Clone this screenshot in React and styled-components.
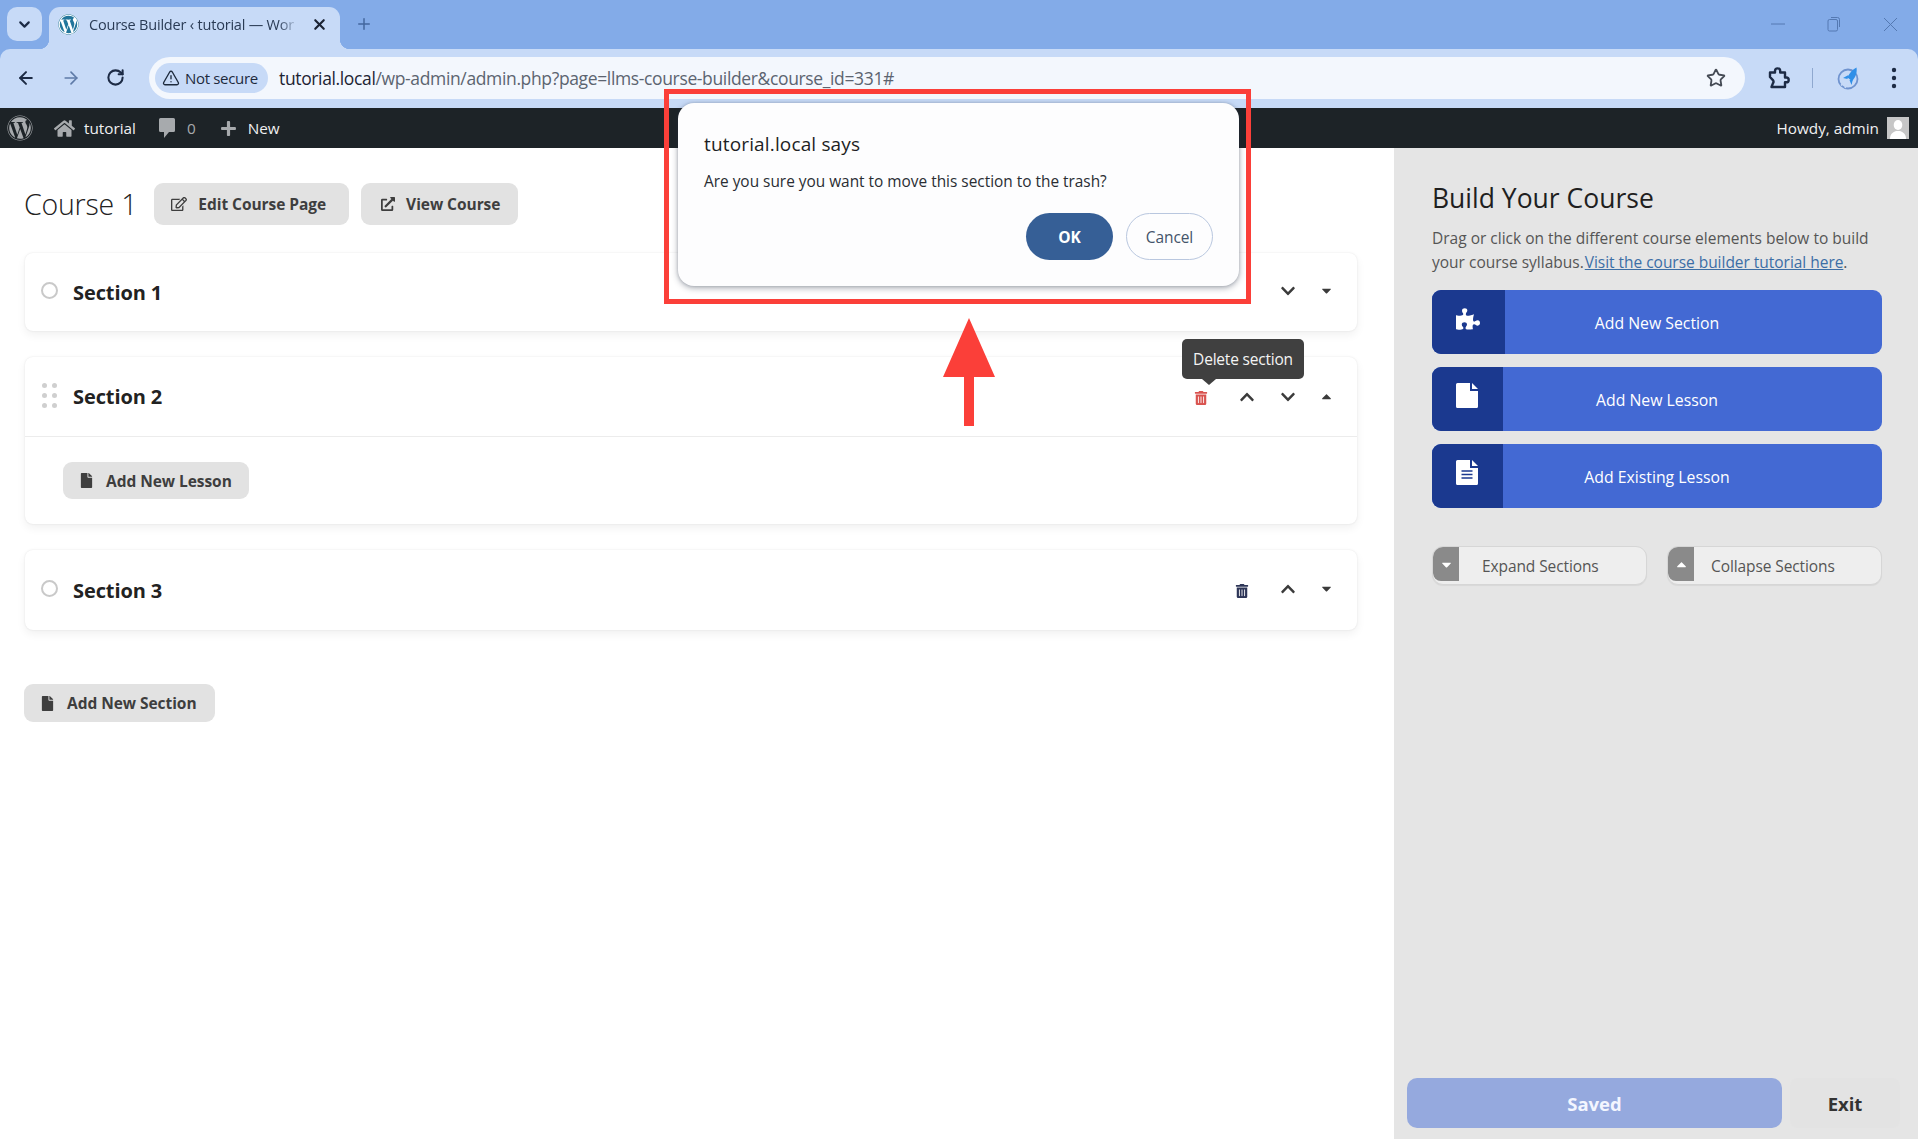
import React from "react";
import styled, { createGlobalStyle } from "styled-components";
import {
  FaWordpress, FaHome, FaPlus, FaRegEdit, FaExternalLinkAlt, FaFile,
  FaPuzzlePiece, FaTrashAlt, FaChevronUp, FaChevronDown, FaCaretUp, FaCaretDown,
} from "react-icons/fa";
import { ArrowLeft, ArrowRight, RotateCw, ChevronDown, X, Plus, TriangleAlert, Star } from "lucide-react";

const Global = createGlobalStyle`
  html, body { margin: 0; padding: 0; background: #fff; }
  body { font-family: "Open Sans", "Noto Sans", "Liberation Sans", sans-serif; overflow: hidden; }
  * { box-sizing: border-box; }
`;

const Page = styled.div`
  position: relative;
  width: 1918px;
  height: 1139px;
  display: flex;
  flex-direction: column;
  overflow: hidden;
  background: #fff;
`;

const Browser = styled.div`
  background: #83abe8;
  flex: none;
`;

const TabStrip = styled.div`
  height: 49px;
  display: flex;
  align-items: flex-end;
  padding-left: 7px;
`;

const TabList = styled.div`
  width: 35px;
  height: 34px;
  margin-bottom: 8px;
  border-radius: 10px;
  background: #c7daf7;
  display: flex;
  align-items: center;
  justify-content: center;
  color: #1d2b45;
`;

const Tab = styled.div`
  position: relative;
  width: 291px;
  height: 42px;
  margin-left: 7px;
  background: #c7daf7;
  border-radius: 11px 11px 0 0;
  display: flex;
  align-items: center;
  padding: 0 12px 7px 9px;
  &::before, &::after {
    content: "";
    position: absolute;
    bottom: 0;
    width: 10px;
    height: 10px;
  }
  &::before { left: -10px; background: radial-gradient(circle at 0 0, transparent 10px, #c7daf7 10.5px); }
  &::after { right: -10px; background: radial-gradient(circle at 100% 0, transparent 10px, #c7daf7 10.5px); }
`;

const Favicon = styled.span`
  width: 21px;
  height: 21px;
  border-radius: 50%;
  background: #fff;
  color: #21759b;
  display: flex;
  flex: none;
  font-size: 21px;
`;

const TabTitle = styled.span`
  flex: 1;
  margin-left: 10px;
  font-size: 14.5px;
  letter-spacing: -0.2px;
  color: #2a3b55;
  white-space: nowrap;
  overflow: hidden;
  -webkit-mask-image: linear-gradient(90deg, #000 90%, transparent 100%);
  mask-image: linear-gradient(90deg, #000 90%, transparent 100%);
`;

const TabClose = styled.span`
  display: flex;
  margin-left: 12px;
  color: #1b2333;
`;

const NewTab = styled.span`
  display: flex;
  margin: 0 0 16px 15px;
  color: #43679f;
`;

const WindowControls = styled.div`
  margin-left: auto;
  margin-right: 20px;
  margin-bottom: 17px;
  display: flex;
  align-items: center;
  gap: 42px;
  color: #5479b2;
`;

const Toolbar = styled.div`
  height: 59px;
  background: #c7daf7;
  border-radius: 10px 10px 0 0;
  display: flex;
  align-items: center;
  padding: 0 17px 2px 16px;
`;

const NavIcon = styled.span`
  display: flex;
  width: 20px;
  margin-right: ${(p) => p.$gap || 25}px;
  color: ${(p) => p.$color || "#1d2b45"};
`;

const Omnibox = styled.div`
  width: 1596px;
  height: 42px;
  margin-left: 10px;
  border-radius: 21px;
  background: #f3f7fd;
  display: flex;
  align-items: center;
  padding: 0 19px 0 6px;
`;

const SecurityChip = styled.span`
  height: 30px;
  padding: 0 0 0 7px;
  width: 113px;
  border-radius: 15px;
  background: #c7daf7;
  display: flex;
  align-items: center;
  gap: 5px;
  font-size: 15px;
  font-weight: 500;
  letter-spacing: -0.32px;
  color: #1d2a3d;
  white-space: nowrap;
`;

const Url = styled.div`
  margin-left: 11px;
  flex: 1;
  font-size: 17.5px;
  letter-spacing: -0.36px;
  color: #5c6470;
  white-space: nowrap;
  & b { font-weight: 400; color: #1d2433; }
`;

const ToolIcons = styled.div`
  display: flex;
  align-items: center;
  margin-left: 21px;
  color: #1d2b45;
`;

const ToolSep = styled.span`
  width: 1px;
  height: 20px;
  background: #8fa8cf;
  margin: 0 24px 0 22px;
`;

const ToolGap = styled.span`
  width: 30px;
`;

const AdminBar = styled.div`
  height: 40px;
  flex: none;
  background: #1d2327;
  display: flex;
  align-items: center;
  padding: 0 9px 0 7px;
  color: #f0f0f1;
  font-size: 15.3px;
`;

const AdminIcon = styled.span`
  display: flex;
  color: #a7aaad;
  margin-right: ${(p) => p.$mr || 0}px;
`;

const AdminText = styled.span`
  color: ${(p) => p.$muted ? "#a7aaad" : "#f0f0f1"};
  margin-right: ${(p) => p.$mr || 0}px;
`;

const Avatar = styled.span`
  width: 22px;
  height: 22px;
  margin-left: 8px;
  display: flex;
  background: #c6c6c6;
`;

const Spacer = styled.span`flex: 1;`;

const Workspace = styled.div`
  flex: 1;
  display: flex;
  min-height: 0;
`;

const Main = styled.main`
  flex: 1;
  padding: 35px 37px 0 25px;
`;

const CourseHeader = styled.header`
  display: flex;
  align-items: center;
  height: 42px;
  margin-bottom: 28px;
`;

const CourseTitle = styled.h1`
  margin: 0 17px 0 -1px;
  font-size: 28.5px;
  font-weight: 300;
  letter-spacing: -0.2px;
  color: #222;
  white-space: nowrap;
`;

const GreyButton = styled.button`
  height: ${(p) => p.$h || 42}px;
  padding: 0 ${(p) => p.$pr || 18}px 0 ${(p) => p.$pl || 18}px;
  margin-right: ${(p) => p.$mr || 0}px;
  margin-left: ${(p) => p.$ml || 0}px;
  border: 0;
  border-radius: 9px;
  background: #e2e2e2;
  color: #3e3e3e;
  font: 700 15.5px "Open Sans", sans-serif;
  letter-spacing: -0.05px;
  display: inline-flex;
  align-items: center;
  gap: ${(p) => p.$gap || 11}px;
  white-space: nowrap;
`;

const SectionList = styled.div`
  display: flex;
  flex-direction: column;
  gap: 26px;
`;

const Card = styled.section`
  background: #fff;
  border-radius: 8px;
  box-shadow: 0 0 2px rgba(0,0,0,.1), 0 4px 10px rgba(0,0,0,.06);
`;

const CardHead = styled.div`
  height: ${(p) => p.$h}px;
  display: flex;
  align-items: center;
  padding-left: 16px;
  border-bottom: ${(p) => p.$open ? "1px solid #ececec" : "0"};
`;

const Radio = styled.span`
  width: 17px;
  height: 17px;
  margin: -3px 0 0 0;
  border: 2px solid #c9c9c9;
  border-radius: 50%;
`;

const Handle = styled.span`
  width: 17px;
  margin-top: -2px;
  display: grid;
  grid-template-columns: 5px 5px;
  grid-auto-rows: 5px;
  justify-content: space-between;
  row-gap: 5px;
  padding: 0 1px;
  & i { background: #cfcfcf; border-radius: 50%; }
`;

const SectionName = styled.h2`
  margin: 0 0 0 15px;
  font-size: 20px;
  font-weight: 700;
  letter-spacing: -0.1px;
  color: #222;
  flex: 1;
`;

const CardTools = styled.div`
  display: grid;
  grid-template-columns: 24px 17px 24px 17px 24px 14px 24px;
  align-items: center;
  justify-items: center;
  margin-right: 19px;
  margin-top: ${(p) => p.$mt || 0}px;
  color: #3b3b3b;
  & > span { display: flex; grid-row: 1; }
`;

const TrashSlot = styled.span`
  grid-column: ${(p) => p.$col};
  position: relative;
  margin: ${(p) => p.$mt}px 10px 0 0;
  color: ${(p) => p.$color};
`;

const ToolSlot = styled.span`
  grid-column: ${(p) => p.$col};
`;

const Tooltip = styled.div`
  position: absolute;
  left: -12px;
  bottom: 26px;
  height: 40px;
  width: 122px;
  border-radius: 5px;
  background: #404040;
  color: #f4f4f4;
  font-size: 15.5px;
  letter-spacing: -0.2px;
  display: flex;
  align-items: center;
  justify-content: center;
  white-space: nowrap;
  &::after {
    content: "";
    position: absolute;
    left: 20px;
    bottom: -6px;
    border-left: 7px solid transparent;
    border-right: 7px solid transparent;
    border-top: 6px solid #404040;
  }
`;

const CardBody = styled.div`
  height: 87px;
  padding: 25px 0 0 38px;
`;

const AddRow = styled.div`
  margin-top: 54px;
`;

const Sidebar = styled.aside`
  width: 524px;
  flex: none;
  background: #e5e5e5;
  display: flex;
  flex-direction: column;
  padding: 30px 36px 11px 38px;
`;

const SideTitle = styled.h2`
  margin: 0 0 8px;
  font-size: 26.5px;
  line-height: 40px;
  font-weight: 500;
  color: #1f1f1f;
`;

const Intro = styled.p`
  margin: 0 0 16px;
  font-size: 15.5px;
  line-height: 24px;
  color: #555;
  white-space: nowrap;
  & a { color: #3c6ea5; text-decoration: underline; letter-spacing: -0.03px; margin-left: -3px; }
`;

const ActionList = styled.div`
  display: flex;
  flex-direction: column;
  gap: 13px;
`;

const ActionButton = styled.button`
  height: 64px;
  border: 0;
  padding: 0;
  border-radius: 9px;
  overflow: hidden;
  background: #4369d3;
  color: #fff;
  display: grid;
  grid-template-columns: ${(p) => p.$cell}px 1fr ${(p) => p.$cell}px;
  align-items: center;
  font: 400 15.8px "Open Sans", sans-serif;
`;

const ActionIcon = styled.span`
  height: 100%;
  background: #1b398f;
  display: flex;
  align-items: center;
  padding-left: 24px;
  padding-bottom: 7px;
`;

const ActionLabel = styled.span`
  margin-top: 2px;
`;

const ToggleRow = styled.div`
  display: flex;
  justify-content: space-between;
  margin-top: 38px;
`;

const ToggleButton = styled.button`
  width: 215px;
  height: 39px;
  padding: 0;
  border: 1px solid #d6d6d6;
  border-radius: 11px;
  background: #eeeeee;
  color: #555;
  font: 400 15.5px "Open Sans", sans-serif;
  letter-spacing: -0.1px;
  display: flex;
  align-items: center;
  overflow: hidden;
  box-shadow: 0 1px 1px rgba(0,0,0,.06);
`;

const ToggleIcon = styled.span`
  width: 26px;
  height: 34px;
  margin: -3px ${(p) => p.$mr}px 0 0;
  background: #8a8a8a;
  color: #fff;
  border-radius: 8px 0 0 8px;
  display: flex;
  align-items: center;
  justify-content: center;
`;

const SaveRow = styled.div`
  margin: auto -18px 0 -25px;
  display: flex;
  gap: 8px;
`;

const SaveButton = styled.button`
  width: 375px;
  height: 50px;
  border: 0;
  border-radius: 10px;
  background: #95a9de;
  color: #f3f6ff;
  font: 700 18.5px "Open Sans", sans-serif;
`;

const ExitButton = styled.button`
  width: 110px;
  height: 50px;
  border: 0;
  border-radius: 8px;
  background: #e3e3e3;
  color: #333;
  font: 700 18.5px "Open Sans", sans-serif;
`;

const Dialog = styled.div`
  position: absolute;
  left: 678px;
  top: 103px;
  width: 561px;
  height: 183px;
  border-radius: 16px;
  background: #fdfdfe;
  box-shadow: 0 2px 6px rgba(40,50,70,.4), 0 0 3px rgba(40,50,70,.2);
  padding: 28px 26px 0 26px;
  z-index: 3;
`;

const DialogTitle = styled.div`
  font-size: 19px;
  line-height: 26px;
  font-weight: 500;
  letter-spacing: 0.15px;
  color: #1d1f24;
`;

const DialogText = styled.div`
  margin-top: 13px;
  font-size: 15.4px;
  line-height: 24px;
  color: #2a2d33;
`;

const DialogActions = styled.div`
  margin-top: 19px;
  display: flex;
  justify-content: flex-end;
  gap: 13px;
`;

const DialogButton = styled.button`
  width: 87px;
  height: 47px;
  border-radius: 24px;
  border: ${(p) => p.$primary ? "0" : "1px solid #b9c7df"};
  background: ${(p) => p.$primary ? "#365f96" : "#fdfdfe"};
  color: ${(p) => p.$primary ? "#fff" : "#44546a"};
  font: ${(p) => p.$primary ? 700 : 500} 15.5px "Open Sans", sans-serif;
  letter-spacing: -0.1px;
`;

const Highlight = styled.div`
  position: absolute;
  left: 664px;
  top: 89px;
  width: 587px;
  height: 215px;
  border: 5px solid #fb3f39;
  z-index: 4;
`;

const Arrow = styled.svg`
  position: absolute;
  left: 942px;
  top: 318px;
  z-index: 4;
`;

function ChromePuzzle() {
  return (
    <svg width="24" height="24" viewBox="0 0 24 24" fill="none" stroke="#1d2b45" strokeWidth="2.4" strokeLinejoin="round">
      <path d="M4 6.500h5V5a2.600 2.600 0 0 1 5.200 0v1.500H19v5h1.300a2.400 2.400 0 0 1 0 4.800H19V21H5.500l1.400-3.700a2.600 2.600 0 0 0 0-3.200L4 11z" />
    </svg>
  );
}

function ProfileRocket() {
  return (
    <svg width="24" height="24" viewBox="0 0 24 24">
      <circle cx="11" cy="13" r="9.500" fill="none" stroke="#6f93cf" strokeWidth="1.800" />
      <path d="M19.500 1.500c.8 5-.8 10-4.500 13.500l-4.500-3.500C12.500 7 15.500 3.500 19.500 1.500z" fill="#2f8fe8" />
      <path d="M11.500 9L6 12l4.500 1zM16 13l-1.500 6-2-5z" fill="#2f8fe8" />
      <path d="M4 19.500c1.500-2 3-3 4.500-3.500M8 22c1-2 2-3 3-4" fill="none" stroke="#c7daf7" strokeWidth="1.500" />
    </svg>
  );
}

function RestoreIcon() {
  return (
    <svg width="14" height="16" viewBox="0 0 14 16" fill="none" stroke="currentColor" strokeWidth="1">
      <rect x="1" y="3.500" width="9.500" height="11.500" rx="1.500" />
      <path d="M4 1.500h6.500a2 2 0 0 1 2 2V11" />
    </svg>
  );
}

function CloseThin() {
  return (
    <svg width="15" height="15" viewBox="0 0 15 15" stroke="currentColor" strokeWidth="1">
      <path d="M1 1l13 13M14 1L1 14" />
    </svg>
  );
}

function MinimizeIcon() {
  return (
    <svg width="14" height="2" viewBox="0 0 14 2" stroke="currentColor" strokeWidth="1">
      <path d="M0 1h14" />
    </svg>
  );
}

function Dots() {
  return (
    <svg width="6" height="22" viewBox="0 0 6 22" fill="#1d2b45">
      <circle cx="3" cy="3" r="2.200" /><circle cx="3" cy="11" r="2.200" /><circle cx="3" cy="19" r="2.200" />
    </svg>
  );
}

function AvatarFigure() {
  return (
    <svg width="22" height="22" viewBox="0 0 22 22" fill="#fff">
      <ellipse cx="11" cy="8" rx="4.300" ry="5" />
      <path d="M3 22c0-5 3-7 6-8h4c3 1 6 3 6 8z" />
    </svg>
  );
}

function AdminComment() {
  return (
    <svg width="18" height="22" viewBox="0 0 18 22" fill="currentColor">
      <path d="M2.500 1h13A1.500 1.500 0 0 1 17 2.500v11a1.500 1.500 0 0 1-1.500 1.500H11l-5 6v-6H2.500A1.500 1.500 0 0 1 1 13.500v-11A1.500 1.500 0 0 1 2.500 1z" />
    </svg>
  );
}

function SheetIcon({ lines }) {
  return (
    <svg width="22" height="25" viewBox="0 0 22 25">
      <path d="M1.500 0H14v8h8v15.500a1.500 1.500 0 0 1-1.500 1.500h-19A1.500 1.500 0 0 1 0 23.500v-22A1.500 1.500 0 0 1 1.500 0z" fill="#fff" />
      <path d="M16 0l6 6h-6z" fill="#fff" />
      {lines && <path d="M5.500 11h11M5.500 14.500h11M5.500 18h11" stroke="#1b398f" strokeWidth="1.400" />}
    </svg>
  );
}

export default function App() {
  return (
    <Page>
      <Global />
      <Browser>
        <TabStrip>
          <TabList><ChevronDown size={17} strokeWidth={3} /></TabList>
          <Tab>
            <Favicon><FaWordpress /></Favicon>
            <TabTitle>Course Builder ‹ tutorial — Wor</TabTitle>
            <TabClose><X size={17} strokeWidth={3} /></TabClose>
          </Tab>
          <NewTab><Plus size={18} strokeWidth={2} /></NewTab>
          <WindowControls>
            <MinimizeIcon />
            <RestoreIcon />
            <CloseThin />
          </WindowControls>
        </TabStrip>
        <Toolbar>
          <NavIcon><ArrowLeft size={20} strokeWidth={2.4} /></NavIcon>
          <NavIcon $color="#5f7ba8"><ArrowRight size={20} strokeWidth={2} /></NavIcon>
          <NavIcon $gap={13}><RotateCw size={19} strokeWidth={2.6} /></NavIcon>
          <Omnibox>
            <SecurityChip><TriangleAlert size={18} strokeWidth={1.8} />Not secure</SecurityChip>
            <Url><b>tutorial.local</b>/wp-admin/admin.php?page=llms-course-builder&amp;course_id=331#</Url>
            <Star size={20} strokeWidth={2.2} color="#454b55" />
          </Omnibox>
          <ToolIcons>
            <ChromePuzzle />
            <ToolSep />
            <ProfileRocket />
            <ToolGap />
            <Dots />
          </ToolIcons>
        </Toolbar>
      </Browser>
      <AdminBar>
        <AdminIcon $mr={21}><FaWordpress size={26} /></AdminIcon>
        <AdminIcon $mr={9}><FaHome size={21} /></AdminIcon>
        <AdminText $mr={22}>tutorial</AdminText>
        <AdminIcon $mr={11}><AdminComment /></AdminIcon>
        <AdminText $muted $mr={24}>0</AdminText>
        <AdminIcon $mr={11}><FaPlus size={17} /></AdminIcon>
        <AdminText>New</AdminText>
        <Spacer />
        <AdminText>Howdy, admin</AdminText>
        <Avatar><AvatarFigure /></Avatar>
      </AdminBar>
      <Workspace>
        <Main>
          <CourseHeader>
            <CourseTitle>Course 1</CourseTitle>
            <GreyButton $mr={12} $pl={17} $pr={23}><FaRegEdit size={16} />Edit Course Page</GreyButton>
            <GreyButton $pl={20} $pr={18}><FaExternalLinkAlt size={14} />View Course</GreyButton>
          </CourseHeader>
          <SectionList>
            <Card>
              <CardHead $h={78}>
                <Radio />
                <SectionName>Section 1</SectionName>
                <CardTools $mt={-3}>
                  <ToolSlot $col={5}><FaChevronDown size={16} /></ToolSlot>
                  <ToolSlot $col={7}><FaCaretDown size={15} /></ToolSlot>
                </CardTools>
              </CardHead>
            </Card>
            <Card>
              <CardHead $h={80} $open>
                <Handle><i /><i /><i /><i /><i /><i /></Handle>
                <SectionName>Section 2</SectionName>
                <CardTools>
                  <TrashSlot $col={1} $mt={2} $color="#d9534f">
                    <FaTrashAlt size={14} />
                    <Tooltip>Delete section</Tooltip>
                  </TrashSlot>
                  <ToolSlot $col={3}><FaChevronUp size={16} /></ToolSlot>
                  <ToolSlot $col={5}><FaChevronDown size={16} /></ToolSlot>
                  <ToolSlot $col={7}><FaCaretUp size={15} /></ToolSlot>
                </CardTools>
              </CardHead>
              <CardBody>
                <GreyButton $h={37} $pl={16} $pr={17} $gap={12}><FaFile size={15} />Add New Lesson</GreyButton>
              </CardBody>
            </Card>
            <Card>
              <CardHead $h={80}>
                <Radio />
                <SectionName>Section 3</SectionName>
                <CardTools $mt={-3}>
                  <TrashSlot $col={3} $mt={4} $color="#2d3557"><FaTrashAlt size={14} /></TrashSlot>
                  <ToolSlot $col={5}><FaChevronUp size={16} /></ToolSlot>
                  <ToolSlot $col={7}><FaCaretDown size={15} /></ToolSlot>
                </CardTools>
              </CardHead>
            </Card>
          </SectionList>
          <AddRow>
            <GreyButton $h={38} $pl={16} $pr={18} $gap={12} $ml={-1}><FaFile size={15} />Add New Section</GreyButton>
          </AddRow>
        </Main>
        <Sidebar>
          <SideTitle>Build Your Course</SideTitle>
          <Intro>
            Drag or click on the different course elements below to build<br />
            your course syllabus. <a href="#tutorial">Visit the course builder tutorial here</a>.
          </Intro>
          <ActionList>
            <ActionButton $cell={73}><ActionIcon><FaPuzzlePiece size={24} color="#fff" /></ActionIcon><ActionLabel>Add New Section</ActionLabel></ActionButton>
            <ActionButton $cell={71}><ActionIcon><SheetIcon /></ActionIcon><ActionLabel>Add New Lesson</ActionLabel></ActionButton>
            <ActionButton $cell={71}><ActionIcon><SheetIcon lines /></ActionIcon><ActionLabel>Add Existing Lesson</ActionLabel></ActionButton>
          </ActionList>
          <ToggleRow>
            <ToggleButton><ToggleIcon $mr={23}><FaCaretDown size={15} /></ToggleIcon>Expand Sections</ToggleButton>
            <ToggleButton><ToggleIcon $mr={17}><FaCaretUp size={15} /></ToggleIcon>Collapse Sections</ToggleButton>
          </ToggleRow>
          <SaveRow>
            <SaveButton>Saved</SaveButton>
            <ExitButton>Exit</ExitButton>
          </SaveRow>
        </Sidebar>
      </Workspace>
      <Dialog>
        <DialogTitle>tutorial.local says</DialogTitle>
        <DialogText>Are you sure you want to move this section to the trash?</DialogText>
        <DialogActions>
          <DialogButton $primary>OK</DialogButton>
          <DialogButton>Cancel</DialogButton>
        </DialogActions>
      </Dialog>
      <Highlight />
      <Arrow width="54" height="108" viewBox="0 0 54 108">
        <path d="M27 0L53 59H32V108H22V59H1z" fill="#fb3f39" />
      </Arrow>
    </Page>
  );
}
